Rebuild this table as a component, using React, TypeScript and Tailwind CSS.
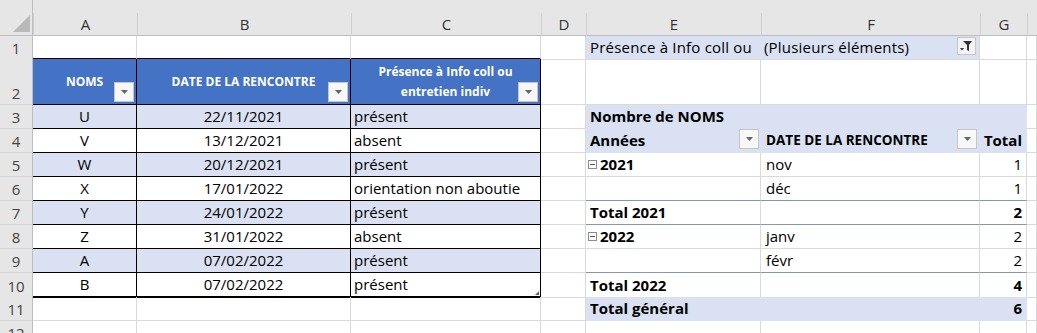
import type { ReactNode } from "react";
import { twMerge } from "tailwind-merge";

const cols = "grid grid-cols-[33px_104px_214px_190px_45px_175px_219px_47px_1fr]";
const band = "bg-[#d9e1f2]";
const sub = "border-b-[#8497b0]";

function C({ className, children }: { className?: string; children?: ReactNode }) {
  return (
    <div
      className={twMerge(
        "flex items-center whitespace-nowrap border-r border-b border-r-[#dadada] border-b-[#dadada] text-[15px] text-black",
        className
      )}
    >
      {children}
    </div>
  );
}

function RowHead({ n, className }: { n: number; className?: string }) {
  return (
    <div
      className={twMerge(
        "flex items-end justify-center border-r border-b border-r-[#bdbdbd] border-b-[#d4d4d4] bg-[#e6e6e6] pb-[1px] text-[15px] leading-[20px] text-[#444]",
        className
      )}
    >
      {n}
    </div>
  );
}

function Drop({ className }: { className?: string }) {
  return (
    <span
      className={twMerge(
        "absolute right-[1px] bottom-[1px] flex h-[20px] w-[20px] items-center justify-center border border-[#c6c6c6] bg-[#f8f8f8]",
        className
      )}
    >
      <svg width="7" height="4" viewBox="0 0 7 4">
        <path d="M0 0h7L3.5 4z" fill="#666" />
      </svg>
    </span>
  );
}

function Minus() {
  return (
    <span className="mr-[3px] ml-[-2px] flex h-[9px] w-[9px] items-center justify-center border border-[#8c8c8c] bg-white">
      <span className="h-[1px] w-[5px] bg-[#555]" />
    </span>
  );
}

type Data = { nom: string; date: string; pres: string };

const data: Data[] = [
  { nom: "U", date: "22/11/2021", pres: "présent" },
  { nom: "V", date: "13/12/2021", pres: "absent" },
  { nom: "W", date: "20/12/2021", pres: "présent" },
  { nom: "X", date: "17/01/2022", pres: "orientation non aboutie" },
  { nom: "Y", date: "24/01/2022", pres: "présent" },
  { nom: "Z", date: "31/01/2022", pres: "absent" },
  { nom: "A", date: "07/02/2022", pres: "présent" },
  { nom: "B", date: "07/02/2022", pres: "présent" },
];

// pivot rows 3..12 (columns E, F, G)
type Piv = { e?: string; f?: string; g?: string; bold?: boolean; blue?: boolean; line?: boolean; year?: boolean };

const pivot: Piv[] = [
  { e: "Nombre de NOMS", bold: true, blue: true },
  { e: "Années", f: "DATE DE LA RENCONTRE", g: "Total", bold: true, blue: true },
  { e: "2021", f: "nov", g: "1", year: true },
  { f: "déc", g: "1", line: true },
  { e: "Total 2021", g: "2", bold: true, line: true },
  { e: "2022", f: "janv", g: "2", year: true },
  { f: "févr", g: "2", line: true },
  { e: "Total 2022", g: "4", bold: true, line: true },
  { e: "Total général", g: "6", bold: true, blue: true },
  {},
];

export default function App() {
  return (
    <div className="h-[333px] w-[1037px] overflow-hidden bg-white font-['Open_Sans',sans-serif]">
      {/* column headers */}
      <div className={twMerge(cols, "h-[36px] border-b border-[#bdbdbd] bg-[#e6e6e6]")}>
        <div className="relative border-r border-[#bdbdbd]">
          <svg className="absolute top-[15px] left-[13px]" width="17" height="17" viewBox="0 0 17 17">
            <path d="M17 0V17H0z" fill="#b9b9b9" />
          </svg>
        </div>
        {["A", "B", "C", "D", "E", "F", "G", ""].map((l, i) => (
          <div key={i} className="mt-[13px] flex items-center justify-center border-l border-[#d0d0d0] text-[15px] text-[#333] first:border-l-0">
            {l}
          </div>
        ))}
      </div>

      {/* row 1 */}
      <div className={twMerge(cols, "h-[23px]")}>
        <RowHead n={1} />
        <C className="border-b-2 border-b-black" />
        <C className="border-b-2 border-b-black" />
        <C className="border-b-2 border-b-black" />
        <C />
        <C className={twMerge(band, "border-r-[#d9e1f2] pl-[4px] tracking-[0.2px]")}>Présence à Info coll ou</C>
        <C className={twMerge(band, "relative pl-[3px] tracking-[0.2px]")}>
          (Plusieurs éléments)
          <span className="absolute top-[1px] right-[3px] flex h-[18px] w-[19px] items-center justify-center border border-[#c6c6c6] bg-[#f4f4f4]">
            <svg width="13" height="12" viewBox="0 0 13 12">
              <path d="M3 1h9L9 5v6L7 10V5z" fill="#333" />
              <path d="M0 8h4L2 10.5z" fill="#333" />
            </svg>
          </span>
        </C>
        <C />
        <C />
      </div>

      {/* row 2: table header */}
      <div className={twMerge(cols, "h-[46px]")}>
        <RowHead n={2} />
        {["NOMS", "DATE DE LA RENCONTRE", "Présence à Info coll ou entretien indiv"].map((h) => (
          <C
            key={h}
            className="relative justify-center whitespace-normal border-r-black border-b-black bg-[#4472c4] px-[22px] text-center text-[12px] leading-[20px] font-bold text-white"
          >
            {h}
            <Drop className="right-[2px] bottom-[2px]" />
          </C>
        ))}
        <C />
        <C />
        <C />
        <C />
        <C />
      </div>

      {/* rows 3..12 */}
      {pivot.map((p, i) => {
        const d = data[i];
        const row = i + 3;
        const last = row === 10;
        const odd = row % 2 === 1;
        const tb = d ? twMerge("border-r-black border-b-black", odd && band, last && "border-b-2") : "";
        const pb = twMerge(p.blue && twMerge(band, "border-r-[#d9e1f2] border-b-[#d9e1f2]"), p.line && sub);
        return (
          <div key={row} className={twMerge(cols, "h-[24px]")}>
            <RowHead n={row} />
            <C className={twMerge(tb, "justify-center")}>{d?.nom}</C>
            <C className={twMerge(tb, "justify-center")}>{d?.date}</C>
            <C className={twMerge(tb, "relative pl-[3px]")}>
              {d?.pres}
              {last && (
                <svg className="absolute right-[1px] bottom-[1px]" width="4" height="4" viewBox="0 0 4 4">
                  <path d="M4 0V4H0z" fill="#5a5aa0" />
                </svg>
              )}
            </C>
            <C />
            <C className={twMerge(pb, "relative pl-[4px]", (p.bold || p.year) && "font-bold")}>
              {p.year && <Minus />}
              {p.e}
              {row === 4 && <Drop className="right-[1px] bottom-[3px]" />}
            </C>
            <C className={twMerge(pb, "relative pl-[5px]", row === 4 && "text-[13.5px] font-bold")}>
              {p.f}
              {row === 4 && <Drop className="right-[2px] bottom-[3px]" />}
            </C>
            <C className={twMerge(pb, "justify-end pr-[4px]", p.bold && "font-bold")}>{p.g}</C>
            <C />
          </div>
        );
      })}
    </div>
  );
}
